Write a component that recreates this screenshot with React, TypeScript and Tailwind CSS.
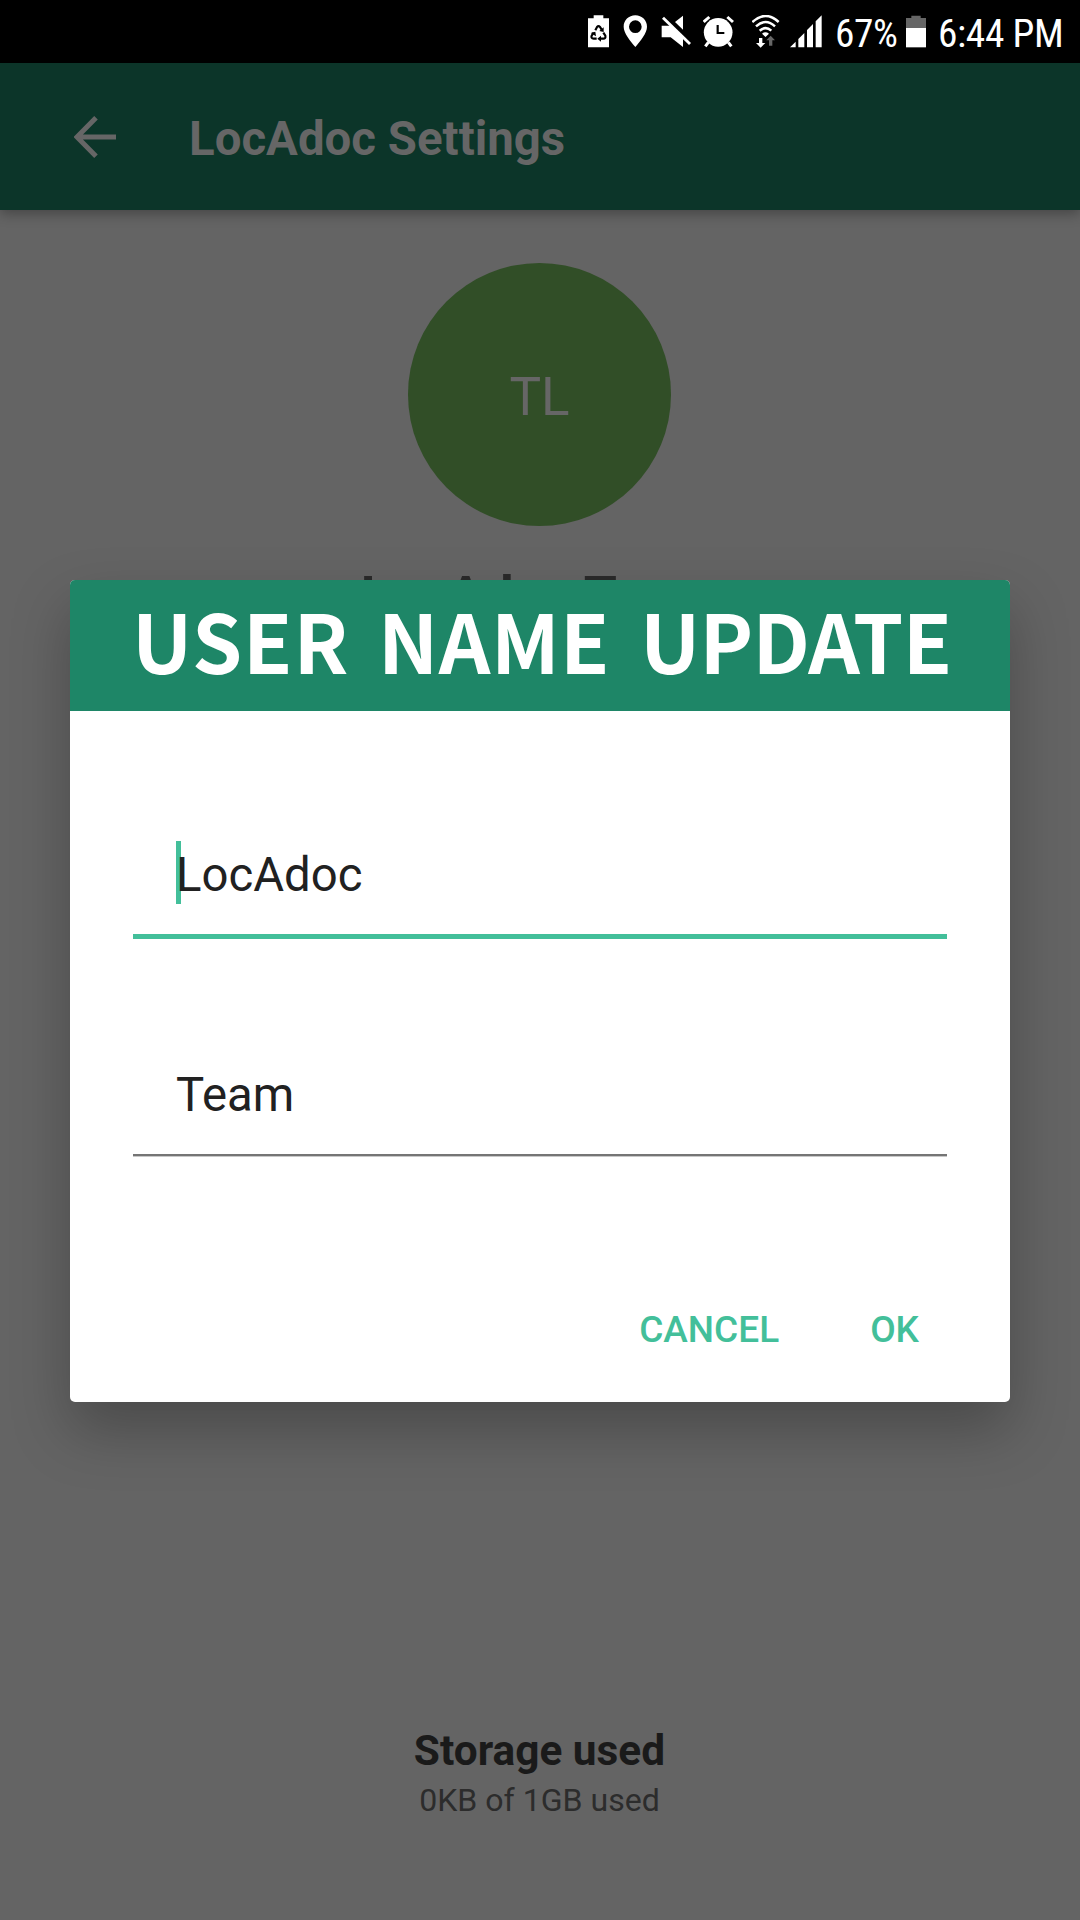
function RecycleBattery() {
  return (
    <svg className="w-[21px] h-[33px]" viewBox="54 45 63 99">
      <path fill="#fff" d="M71 46h29v9h17v87H54V55h17z" />
      <g fill="none" stroke="#000" strokeWidth="6.500">
        <path d="M76 91l5-10q4.500-5 9 0l5 8" />
        <path d="M100 98l6 9q2 9-6 9h-9" />
        <path d="M80 116h-9q-9-1-6-9l6-9" />
      </g>
      <path fill="#000" d="M101 82v14l-13-3zM93 107v18l-11-9zM62 99l14-4 2 14z" />
    </svg>
  );
}

function Pin() {
  return (
    <svg className="w-[24px] h-[33px]" viewBox="159 45 72 99">
      <path fill="#fff" fillRule="evenodd" d="M196 46c20 0 35 15 35 34 0 20-20 42-35 61-15-19-35-41-35-61 0-19 15-34 35-34zm0 15a19 19 0 1 0 0 38 19 19 0 0 0 0-38z" />
    </svg>
  );
}

function Muted() {
  return (
    <svg className="w-[30px] h-[33px]" viewBox="273 45 90 99">
      <path fill="#fff" d="M339 47v42l-24-23zM275 77h27l37 37v27l-37-29h-27z" />
      <path stroke="#fff" strokeWidth="8.500" d="M279 53l81 79" />
    </svg>
  );
}

function Alarm() {
  return (
    <svg className="w-[31px] h-[33px]" viewBox="399 45 93 99">
      <path stroke="#fff" strokeWidth="9" d="M401 66l17-15M489 66l-17-15M415 127l-9 12M475 127l9 12" />
      <circle cx="444.500" cy="97" r="43" fill="#fff" />
      <path fill="none" stroke="#000" strokeWidth="6.500" d="M443 75v24h20" />
    </svg>
  );
}

function Wifi() {
  return (
    <svg className="w-[28px] h-[33px]" viewBox="546 45 84 99">
      <g fill="none" stroke="#fff" strokeWidth="7.500">
        <path d="M547 66q40-36 79 0" />
        <path d="M558 79q29-26 57 0" />
        <path d="M569 92q18-15 35 0" />
      </g>
      <path fill="#fff" d="M576 101q10-8 21 0l-10.500 10zM567 114h10v15h9l-14 14-14-14h9z" />
      <path fill="#666" d="M597 137v-16h-8l13-14 13 14h-8v16z" />
    </svg>
  );
}

function Signal() {
  return (
    <svg className="w-[32px] h-[33px]" viewBox="660 45 96 99">
      <path fill="#fff" d="M660 142l17-17v17zM685 117l18-18v43h-18zM711 90l18-18v70h-18zM737 64l18-18v96h-18z" />
    </svg>
  );
}

function Battery() {
  return (
    <svg className="w-[21px] h-[33px]" viewBox="258 45 63 99">
      <path fill="#666" d="M274 47h28v7h16v30h-60V54h16z" />
      <path fill="#fff" d="M258 84h60v58h-60z" />
    </svg>
  );
}

function StatusBar() {
  return (
    <div className="flex h-[63px] w-full bg-black pl-[588px] pt-[15px] text-white">
      <RecycleBattery />
      <div className="w-[14px]" />
      <Pin />
      <div className="w-[14px]" />
      <Muted />
      <div className="w-[12px]" />
      <Alarm />
      <div className="w-[18px]" />
      <Wifi />
      <div className="w-[10px]" />
      <Signal />
      <span className="ml-[13px] w-[71px] whitespace-nowrap text-[39.4px] leading-[37px] tracking-[-0.5px] [font-stretch:75%]">67%</span>
      <Battery />
      <span className="ml-[11px] whitespace-nowrap text-[39.4px] leading-[37px] tracking-[-0.4px] [font-stretch:75%]">6:44 PM</span>
    </div>
  );
}

function AppBar() {
  return (
    <header className="relative flex h-[147px] items-center bg-[#0c3529] pl-[74px] text-[#666] shadow-[0_4px_12px_rgba(0,0,0,0.3)]">
      <svg className="h-[42px] w-[43px]" viewBox="0 0 43 42" fill="none" stroke="#666" strokeWidth="5">
        <path d="M42 21H4M22 1.800L3 21l19 19.200" />
      </svg>
      <h1 className="ml-[72px] mt-[5px] text-[47.4px] font-bold leading-[60px]">LocAdoc Settings</h1>
    </header>
  );
}

function Dialog() {
  return (
    <div className="absolute left-[70px] top-[580px] flex h-[822px] w-[940px] flex-col overflow-hidden rounded-[5px] bg-white text-[#212121] shadow-[0_28px_58px_rgba(0,0,0,0.26)]">
      <h2 className="flex h-[131px] shrink-0 whitespace-nowrap bg-[#1e8667] pl-[62px] font-['Noto_Sans_CJK_SC',sans-serif] text-[80.5px] font-bold leading-[119px] text-white">
        <span className="w-[246px] tracking-[0.8px]">USER</span>
        <span className="w-[262px] tracking-[0.5px]">NAME</span>
        <span className="tracking-[-0.7px]">UPDATE</span>
      </h2>
      <div className="flex flex-col px-[63px] pt-[131px] text-[47.3px] leading-[66px]">
        <div className="relative h-[97px] border-b-[5px] border-[#43bf9a] pl-[43px]">
          <span className="absolute left-[43px] top-[-1px] h-[63px] w-[5px] bg-[#43bf9a]" />
          <span className="relative">LocAdoc</span>
        </div>
        <div className="mt-[123px] h-[94px] border-b-2 border-[#757575] pl-[43px] shadow-[0_1px_0_#c8c8c8]">Team</div>
      </div>
      <div className="mt-auto flex justify-end gap-[91px] pb-[42px] pr-[91px] text-[37px] font-medium leading-[60px] text-[#43bf9a]">
        <button>CANCEL</button>
        <button>OK</button>
      </div>
    </div>
  );
}

export default function App() {
  return (
    <div className="relative flex h-[1920px] w-[1080px] flex-col overflow-hidden bg-[#646464] font-['Roboto',sans-serif]">
      <StatusBar />
      <AppBar />
      <main className="flex flex-1 flex-col items-center pb-[94px] pr-px pt-[53px]">
        <div className="flex h-[263px] w-[263px] items-center justify-center rounded-full bg-[#314e27] pt-[6px] text-[53px] text-[#666]">TL</div>
        <p className="mt-[40px] text-[53.5px] font-bold leading-[60px] text-[#2a2a2a]">LocAdoc Team</p>
        <p className="mt-auto text-[42.4px] font-bold leading-[50px] text-[#1a1a1a]">Storage used</p>
        <p className="mb-[2px] text-[32.1px] leading-[48px] text-[#2c2c2c]">0KB of 1GB used</p>
      </main>
      <Dialog />
    </div>
  );
}
